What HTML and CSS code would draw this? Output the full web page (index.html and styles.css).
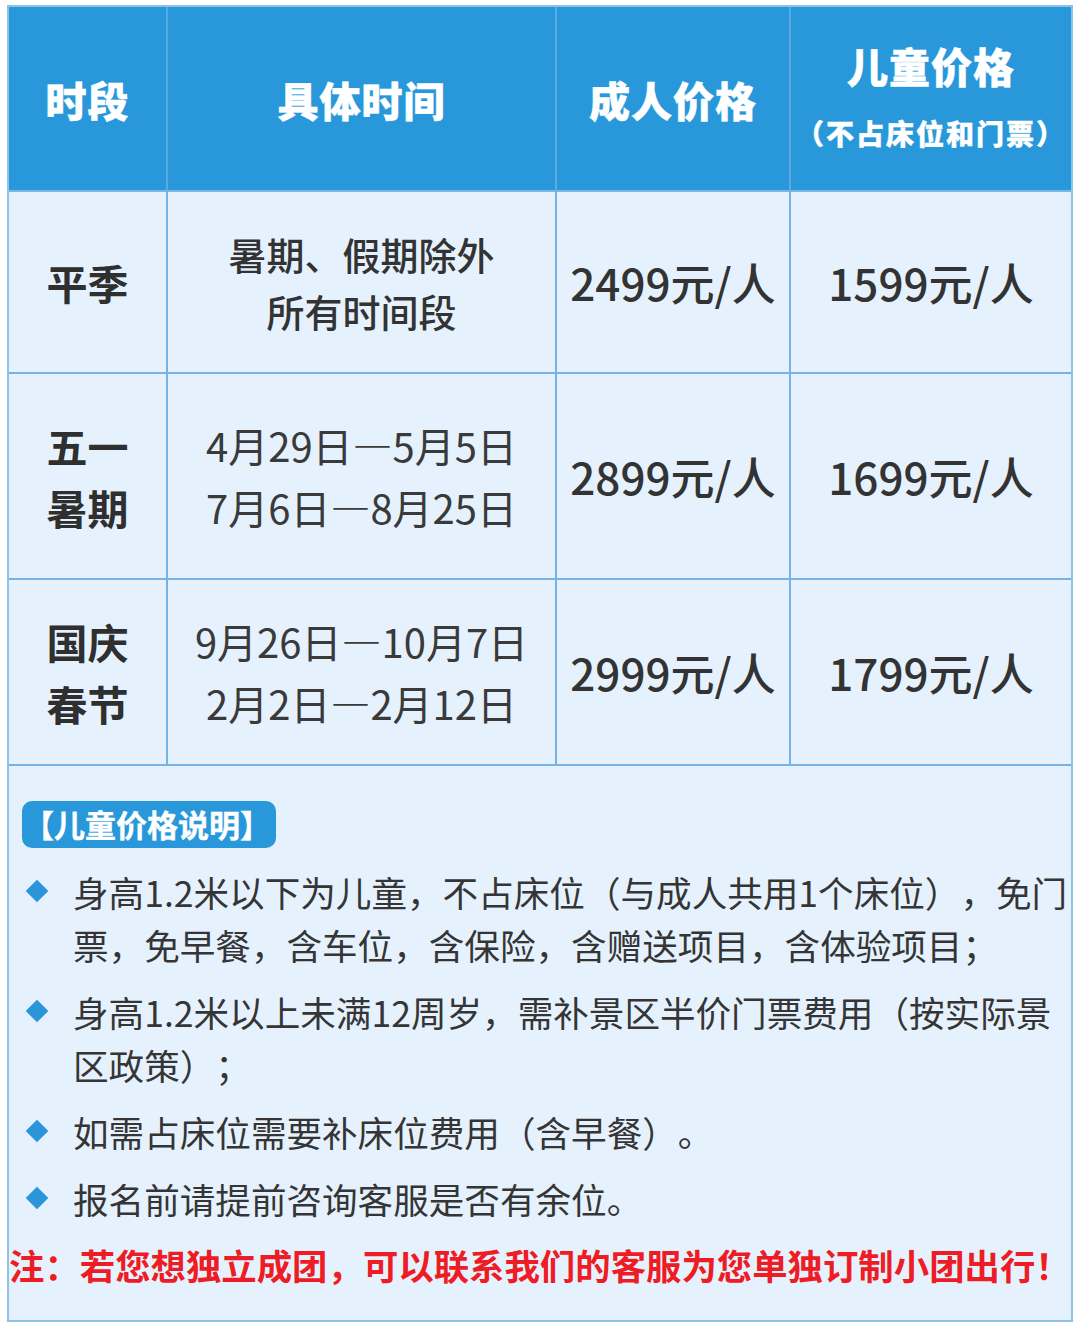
FILE: index.html
```html
<!DOCTYPE html>
<html lang="zh-CN">
<head>
<meta charset="utf-8">
<title>价格表</title>
<link rel="stylesheet" href="styles.css">
</head>
<body>
<div class="card">
  <div class="table">
    <div class="cell head">时段</div>
    <div class="cell head">具体时间</div>
    <div class="cell head">成人价格</div>
    <div class="cell head head-kids last">
      <div class="head-main">儿童价格</div>
      <div class="head-sub">（不占床位和门票）</div>
    </div>

    <div class="cell label">平季</div>
    <div class="cell period">暑期、假期除外<br>所有时间段</div>
    <div class="cell price">2499元/人</div>
    <div class="cell price last">1599元/人</div>

    <div class="cell label tall">五一<br>暑期</div>
    <div class="cell dates">4月29日—5月5日<br>7月6日—8月25日</div>
    <div class="cell price">2899元/人</div>
    <div class="cell price last">1699元/人</div>

    <div class="cell label tall">国庆<br>春节</div>
    <div class="cell dates">9月26日—10月7日<br>2月2日—2月12日</div>
    <div class="cell price">2999元/人</div>
    <div class="cell price last">1799元/人</div>
  </div>

  <div class="notes">
    <div class="tag">【儿童价格说明】</div>
    <ul class="list">
      <li class="item"><span class="diamond"></span><span class="item-text">身高1.2米以下为儿童，不占床位（与成人共用1个床位），免门<br>票，免早餐，含车位，含保险，含赠送项目，含体验项目；</span></li>
      <li class="item"><span class="diamond"></span><span class="item-text">身高1.2米以上未满12周岁，需补景区半价门票费用（按实际景<br>区政策）；</span></li>
      <li class="item"><span class="diamond"></span><span class="item-text">如需占床位需要补床位费用（含早餐）。</span></li>
      <li class="item"><span class="diamond"></span><span class="item-text">报名前请提前咨询客服是否有余位。</span></li>
    </ul>
    <p class="warn">注：若您想独立成团，可以联系我们的客服为您单独订制小团出行！</p>
  </div>
</div>
</body>
</html>
```

FILE: styles.css
```css
* {
  box-sizing: border-box;
}

html, body {
  margin: 0;
  padding: 0;
  background: #ffffff;
}

body {
  font-family: "Noto Sans CJK SC", "Noto Sans", sans-serif;
  color: #333333;
  text-spacing-trim: space-all;
  font-feature-settings: "halt" 0;
}

.card {
  margin: 5px 0 0 7px;
  width: 1066px;
  height: 1317px;
  background: #e5f2fe;
  border: 2px solid #8cc3e9;
  overflow: hidden;
}

.table {
  display: grid;
  grid-template-columns: 159px 389px 234px 1fr;
  grid-template-rows: 185px 182px 206px 186px;
}

.cell {
  display: flex;
  flex-direction: column;
  align-items: center;
  justify-content: center;
  text-align: center;
  border-right: 2px solid #74b3e4;
  border-bottom: 2px solid #74b3e4;
}

.cell.last {
  border-right: none;
}

.head {
  background: #2898da;
  color: #ffffff;
  font-size: 41px;
  font-weight: 900;
  letter-spacing: 1px;
  -webkit-text-stroke: 0.5px #ffffff;
  border-right-color: #5aaadf;
  border-bottom-color: #79b7e6;
}

.head-kids {
  padding-bottom: 8px;
}

.head-main {
  line-height: 56px;
}

.head-sub {
  font-size: 28px;
  line-height: 40px;
  margin-top: 20px;
  letter-spacing: 2px;
  -webkit-text-stroke: 0.4px #ffffff;
}

.label {
  font-size: 41px;
  font-weight: 700;
  line-height: 62px;
  color: #2f2f2f;
}

.period {
  font-size: 38px;
  font-weight: 500;
  line-height: 57px;
  color: #333333;
}

.dates {
  font-size: 40px;
  font-weight: 400;
  line-height: 62px;
  color: #3a3a3a;
}

.price {
  font-size: 44px;
  font-weight: 500;
  color: #333333;
}

.notes {
  padding: 35px 0 0 0;
}

.tag {
  display: inline-block;
  margin-left: 13px;
  height: 47px;
  line-height: 46px;
  padding: 0 5px 0 1px;
  background: #2898da;
  color: #ffffff;
  font-size: 31px;
  font-weight: 700;
  -webkit-text-stroke: 0.4px #ffffff;
  border-radius: 10px;
}

.list {
  list-style: none;
  margin: 17px 0 0 0;
  padding: 0;
  display: flex;
  flex-direction: column;
  gap: 14px;
}

.item {
  display: flex;
  align-items: flex-start;
  font-size: 35.6px;
  line-height: 53px;
  color: #353535;
}

.diamond {
  flex: none;
  width: 16px;
  height: 16px;
  margin: 18px 0 0 20px;
  background: #2a95d8;
  transform: rotate(45deg);
}

.item-text {
  margin-left: 28px;
  white-space: nowrap;
}

.warn {
  margin: 13px 0 0 0;
  font-size: 35.4px;
  line-height: 53px;
  font-weight: 700;
  color: #ee1c24;
  white-space: nowrap;
}
```
